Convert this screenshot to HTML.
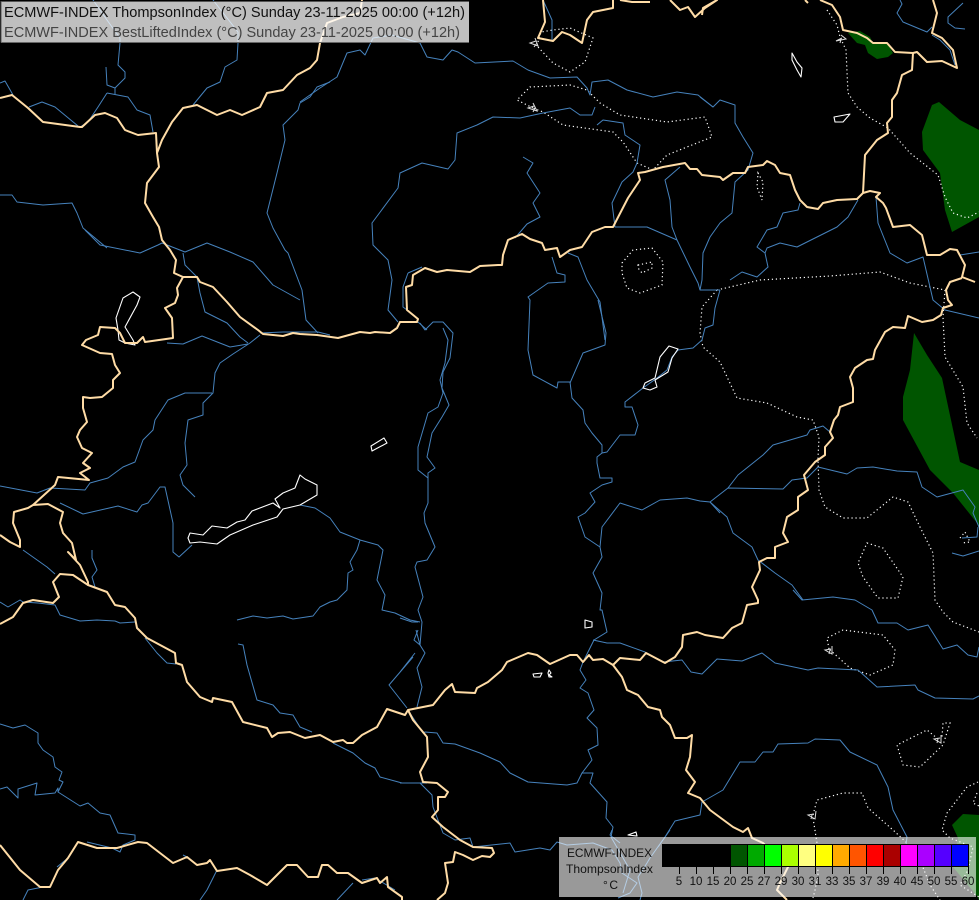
<!DOCTYPE html>
<html>
<head>
<meta charset="utf-8">
<title>ECMWF-INDEX ThompsonIndex</title>
<style>
html,body{margin:0;padding:0;background:#000;width:979px;height:900px;overflow:hidden}
svg{display:block;position:absolute;left:0;top:0}
.g path{fill:#005500;stroke:none}
.r path{fill:none;stroke:#4682bc;stroke-width:1;stroke-linejoin:round}
.d path{fill:none;stroke:#fff;stroke-width:1.2;stroke-dasharray:1.2 2.8}
.l path{fill:none;stroke:#fff;stroke-width:1.1;stroke-linejoin:round}
.b path{fill:none;stroke:#ffdca6;stroke-width:2;stroke-linejoin:round}
.m path{fill:none;stroke:#ddd;stroke-width:1}
text{font-family:"Liberation Sans",sans-serif}
</style>
</head>
<body>
<svg width="979" height="900" viewBox="0 0 979 900" xmlns="http://www.w3.org/2000/svg">
<rect width="979" height="900" fill="#000"/>
<g class="g">
<path d="M848 33L860 31 870 37 873 43 887 43 893 53 888 57 877 59 868 53 865 45 857 43Z"/>
<path d="M939 102L960 120 979 130 979 217 952 232 945 210 940 173 923 150 922 132 932 105Z"/>
<path d="M914 333L927 355 942 378 960 462 979 470 979 527 977 523 953 493 930 470 903 420 903 397 910 370Z"/>
<path d="M952 825L963 814 979 815 979 900 977 896 953 867 958 838Z"/>
</g>
<g class="d">
<path d="M827 10L837 25 840 37 846 50 848 93 857 107 870 118 888 128 910 153 938 175 945 197 953 213 967 218 979 212"/>
<path d="M533 108L517 100 530 87 570 85 587 90 600 103 620 115 667 122 705 117 712 137 667 155 653 170 637 163 623 142 613 132 563 125 543 112Z"/>
<path d="M538 42L541 32 553 30 570 28 593 38 585 62 570 72 553 63 538 47"/>
<path d="M622 263L633 250 652 248 663 262 662 285 640 293 627 288 622 273Z"/>
<path d="M638 265L652 262 652 268 642 273 638 268Z"/>
<path d="M758 173L763 182 762 200 757 187Z"/>
<path d="M717 290L702 307 700 333 703 347 720 362 737 398 767 403 797 417 813 420 819 437 818 458 819 490 825 507 843 518 867 518 893 497 908 502 920 527 933 553 935 600 943 612 953 622 979 632"/>
<path d="M717 290L760 280 830 276 880 272 910 283 945 290 943 317 945 357 963 387 967 423 977 438"/>
<path d="M867 543L883 548 903 577 898 598 878 598 863 577 858 563Z"/>
<path d="M829 649L827 638 843 630 883 635 895 650 893 665 870 675 850 668Z"/>
<path d="M938 739L927 730 897 745 903 765 920 767 943 745 950 723 943 723 942 737"/>
<path d="M813 815L817 800 843 793 862 793 868 808 893 830 907 843 918 855 930 885 940 900"/>
<path d="M813 818L817 843 818 875 815 890 813 898"/>
<path d="M978 782L967 787 947 813 942 830 950 838 973 847 968 870 960 885 979 897"/>
<path d="M977 793L973 803 979 806"/>
<path d="M960 538L965 532 970 542 962 543"/>
</g>
<g class="r">
<path d="M260 335L250 343 233 354 220 363 215 373 213 393 203 403 203 415 188 420 185 443 187 465 180 475 183 485 195 497"/>
<path d="M0 486L37 493 50 488 85 490 90 483 108 478 123 467 135 462 143 440 153 430 155 420 168 400 185 393 212 393"/>
<path d="M60 503L83 514 118 506 137 512 142 505 148 503 160 487 165 487 173 523 173 552 179 557 192 545"/>
<path d="M300 505L315 508 330 518 340 532 360 540 378 545 383 550 377 580 385 595 382 610 395 613 410 620 420 622"/>
<path d="M237 620L253 616 267 618 283 616 293 619 313 616 320 607 330 602 337 600 347 590 348 573 353 570 350 562 357 550 360 540"/>
<path d="M420 323L425 330 433 322 443 322 453 333 450 358 443 372 442 388 449 405 442 417 432 433 427 457 435 468 428 473 428 503 424 513 425 523 435 547 427 560 417 562 415 567 423 597 418 610 422 622 420 645 425 653 417 668 422 687 417 707"/>
<path d="M443 328L448 340 445 363 440 380 443 393 438 407 428 413 418 447 418 470 428 478"/>
<path d="M418 322L427 330M415 653L400 672M413 657L389 685 407 708M416 630L420 645 414 640 418 630M400 618L412 622 418 622"/>
<path d="M408 710L423 733 425 732 437 733 443 743 455 744 480 753 500 762 510 773 528 782 567 785 577 783 582 773 593 773 590 783 607 802 606 818 613 827 611 837 630 870 623 893"/>
<path d="M582 773L592 760 588 750 598 745 597 728 587 718 594 710 588 693 580 688 586 680 580 670 583 662 594 640 607 632 602 610 600 610 602 593 593 573 602 557 600 547 585 537 578 517 585 513 595 502 590 493 602 485 612 482 612 478 600 478 597 463 597 457 602 453 602 445 592 433 585 423 583 410 572 398 570 382 558 382 557 388 533 375 528 350 530 300 528 297 548 283 565 282 565 275 557 273 552 257"/>
<path d="M598 300L606 333 605 345 583 353 570 383"/>
<path d="M602 453L607 452 620 435 635 435 638 425 632 407 625 407 625 402 643 388 657 378 667 370 672 357 678 350 693 348 702 340 705 328 713 325 715 308 720 290"/>
<path d="M700 97L713 107 720 100 735 105 735 123 743 137 753 153 748 170 735 182 732 213 720 223 710 237 703 253 702 280 700 290"/>
<path d="M300 102L320 88 337 77 347 53 360 50 365 55 373 38 392 35 420 43 427 57 443 60 452 50 458 52 475 63 513 61 528 70 550 78 577 77 587 88 590 95 592 82 608 80 627 90 653 97 677 92 698 95 713 107"/>
<path d="M595 107L592 115 580 115 570 108 543 113 520 118 493 117 477 125 457 133 455 160 448 169 422 163 400 173 398 188 372 223 373 245 388 260 392 280 388 310 398 322"/>
<path d="M408 273L422 267M408 273L403 287 403 307 407 310"/>
<path d="M523 157L533 163 527 173 540 193 533 203 540 217 527 224 515 238"/>
<path d="M597 125L603 120 623 123 625 135 640 145 637 163 633 172 622 182 612 203 615 227 647 227 677 240 690 267 698 283 700 290 720 290"/>
<path d="M680 167L665 180 670 200 672 227 677 240"/>
<path d="M568 253L578 257 587 280 600 302 605 340"/>
<path d="M800 203L798 210 783 213 777 227 767 230 757 247 765 253 768 267 757 277 742 272 730 280"/>
<path d="M858 200L848 217 837 227 817 237 797 247 780 243 767 248 765 253"/>
<path d="M876 197L878 223 890 253 907 263 923 257 933 300 945 310 979 318M960 255L979 252"/>
<path d="M963 3L948 17 948 23 955 28 965 29"/>
<path d="M900 0L902 4 897 13 903 22 927 32 932 27M932 35L940 40 950 50 955 65"/>
<path d="M818 467L847 474 857 468 873 467 897 471 917 472 922 487 937 497 963 490 975 507 973 513 979 527"/>
<path d="M818 467L807 478 792 480 783 489 728 488 710 502 700 501 687 498 660 500 642 510 620 503 602 527 600 547"/>
<path d="M728 488L738 475 763 455 773 445 807 435 810 430 823 426 830 432"/>
<path d="M710 502L727 517 733 533 752 547 758 560 775 573 792 585 803 600"/>
<path d="M710 502L720 513"/>
<path d="M962 538L977 537 978 527M952 553L963 556 979 551"/>
<path d="M793 590L802 600 833 597 855 600 872 610 878 623 897 623 908 630 928 625 943 649 957 645 968 655 977 657 979 647"/>
<path d="M593 640L607 643 620 643 645 652 663 662 682 660 691 672 702 674 717 659 742 661 762 653 775 663 808 670 818 668 858 670 877 687 915 685 918 690 935 698 973 699 979 696"/>
<path d="M665 837L675 821 700 815 702 802 723 790 740 762 755 762 763 752 773 752 778 744 808 743 815 739 840 740 850 752 877 765 888 787 893 810 907 837 906 845"/>
<path d="M665 837L650 858 647 863 638 877 642 893 640 900"/>
<path d="M400 783L420 783 432 795 433 807 443 833 455 840 470 838 473 847 510 843 515 852 540 848 550 850 557 842 567 845 593 843 612 850 620 863 622 873 637 883 630 893 618 898"/>
<path d="M612 830L610 835 620 843M670 830L658 847"/>
<path d="M0 602L8 607 20 600 23 602 38 603 55 605 60 615 80 621 97 620 115 621 120 623 135 622"/>
<path d="M23 550L47 567 55 574"/>
<path d="M92 550L92 558 97 570 92 577 95 587"/>
<path d="M145 638L157 653 167 663 176 664"/>
<path d="M238 644L243 645 247 665 257 700 273 705 280 713 293 715 300 727 312 732"/>
<path d="M333 743L353 753 365 763 375 768 380 777 402 783 427 783"/>
<path d="M0 724L13 728 25 725 38 733 38 743 43 750 53 757 55 767 62 772 59 780 63 782 58 792 80 806 88 803 100 813 110 815 118 833 135 835 135 840 123 845 120 852 112 848 87 842"/>
<path d="M0 789L7 787 18 798 18 789 37 783 35 795 55 793 58 788 58 792"/>
<path d="M57 867L68 858M43 887L28 890 23 900M217 870L207 890 200 900M183 855L187 857M353 883L337 900M362 880L375 878 395 890"/>
<path d="M120 43L118 65 125 72 125 78 115 88 115 95M106 67L107 85 115 88"/>
<path d="M93 0L107 20 120 38 120 43"/>
<path d="M213 0L238 32 238 43 237 60 225 67 220 82 207 88 193 105"/>
<path d="M107 93L128 97 137 110 150 115 153 132M107 93L98 107 88 122 80 127"/>
<path d="M0 83L5 81 13 95M29 107L42 102 55 107 78 126"/>
<path d="M330 82L317 87 310 97 300 103 298 110 283 125 285 140 277 173 267 213 273 228 285 250 288 253 302 290 306 320 318 333"/>
<path d="M0 195L12 195 17 202 43 205 72 203 77 213 83 228 107 248"/>
<path d="M85 230L100 245 140 253 158 245 162 243"/>
<path d="M162 243L185 252 207 243 230 252 253 262 273 285 300 300"/>
<path d="M183 253L185 265 197 277 200 293 205 312 227 323 240 337 248 343"/>
<path d="M167 343L183 344 202 336 230 347 248 344"/>
<path d="M260 333L283 332 318 332 330 335"/>
<path d="M543 0L552 20 552 40"/>
</g>
<g class="l">
<path d="M190 533L203 535 212 526 227 528 237 522 245 520 252 511 273 503 280 508 275 499 283 493 295 488 300 475 305 479 317 485 317 495 300 505 283 509 277 517 253 525 230 535 217 544 200 542 190 543 188 538Z"/>
<path d="M133 292L140 297 137 305 125 327 133 340 135 345 125 343 119 340 118 330 116 318 123 298Z"/>
<path d="M371 446L384 438 387 443 372 451Z"/>
<path d="M669 346L678 349 672 358 668 372 655 380 657 387 650 390 643 388 645 383 655 378 660 357Z"/>
<path d="M585 620L592 622 592 627 585 628Z"/>
<path d="M792 53L797 62 802 68 801 77 797 70 792 60Z"/>
<path d="M834 117L850 114 843 122 835 122Z"/>
<path d="M533 674L542 673 540 677 534 677Z"/>
<path d="M549 670L551 673 549 675 552 677 549 677 548 673Z"/>
<path d="M628 835L636 832 637 836Z"/>
</g>
<g class="b">
<path d="M0 98L12 95 28 108 43 122 80 127 82 127 95 115 105 113 117 118 125 130 138 135 156 133 157 153 159 167 147 183 145 203 153 217 159 227 162 240 170 250 176 260 174 273 183 277 197 277 200 282 213 287 227 302 240 317 258 330 263 334 283 336 293 333 300 334 317 335 338 338 360 332 370 333 375 332 390 333 397 328 400 322 417 322 418 319 407 310 406 287 412 285 413 275 425 268 437 272 447 270 470 272 480 266 498 265 502 265 503 255 508 240 522 234 530 239 542 243 545 250 557 248 560 257 570 250 582 247 592 232 605 227 613 227 628 198 640 180 638 173 645 172 663 167 685 163 690 169 697 169 702 175 720 177 723 180 733 173 745 173 748 167 763 165 767 161 775 165 780 173 790 175 795 190 800 200 807 207 818 209 823 203 837 200 857 199 863 193 870 191 880 193 876 197 883 203 886 208 893 227 910 225 922 235 927 255 940 255 950 249 957 250 965 265 962 277 975 282"/>
<path d="M962 278L950 282 946 290 948 300 952 305 943 308 941 315 933 320 922 322 908 316 905 328 893 327 885 332 875 350 873 359 867 360 855 368 850 377 853 388 853 402 840 407 838 415 834 420 830 432 833 438 825 447 825 455 815 462 804 475 808 490 798 497 798 510 787 517 783 533 788 542 775 547 775 558 767 558 759 562 760 570 752 587 758 600 758 603 747 605 742 623 732 628 723 638 705 635 697 632 683 635 682 647 675 657 665 663 646 653 640 660 620 658 613 665 603 659 593 660 589 655 583 662 577 655 570 655 550 664 537 655 528 653 507 662 502 670 488 682 477 688 475 693 455 692 452 684 445 690 433 705 408 710 405 715 387 709 377 727 362 735 353 743 347 743 343 740 333 742 320 735 305 738 290 732 278 733 272 737 267 728 243 722 232 702 213 698 212 702 200 697 187 682 182 665 176 663 175 653 147 638 137 628 135 618 125 607 115 605 107 592 88 585 88 582 80 565 68 552 76 560 72 543 63 533 60 523 63 512 48 504 33 505 28 508 14 512 13 523 20 540 20 547 10 542 0 535"/>
<path d="M33 505L55 485 58 477 89 480 80 473 90 468 83 463 92 453 82 448 77 437 80 430 87 422 83 408 83 397 90 398 102 397 113 388 113 380 120 373 115 365 112 354 100 353 82 345 86 340 98 335 100 327 115 328 120 333 125 343 137 343 143 337 145 342 173 338 172 318 165 308 175 303 178 295 177 288 183 277"/>
<path d="M88 585L73 575 60 574 53 582 59 597 53 603 33 600 23 603 13 617 0 624"/>
<path d="M0 845L20 870 40 887 50 887 58 870 68 858 78 842 97 848 117 848 138 842 147 843 173 863 187 857 197 865 207 863 210 860 217 871 237 868 250 875 267 885 287 865 297 865 308 877 318 877 322 865 328 865 337 873 348 873 362 883 377 878 380 883 387 877 388 887 402 897 402 900"/>
<path d="M408 710L413 720 427 737 428 757 420 772 423 782 437 783 448 792 445 797 438 797 438 810 432 817 443 827 460 840 473 847 492 848 494 853 490 857 482 856 473 860 463 855 455 852 453 862 445 863 448 883 445 893 437 900"/>
<path d="M613 665L622 677 627 690 638 695 648 707 660 710 662 717 670 725 675 738 687 738 692 735 690 757 686 770 695 782 688 793 700 798 710 810 733 827 743 832 748 828 752 838 763 843 775 855 788 867 780 883 777 890 787 900"/>
<path d="M913 53L912 70 902 75 897 93 892 100 892 117 887 123 888 133 877 140 865 155 863 193"/>
<path d="M820 0L832 5 840 17 843 30 857 33 867 38 873 43 887 43 895 52 913 53 917 52 927 62 942 61 957 68 953 50 942 38 932 33 937 13 933 0"/>
<path d="M543 0L545 22 538 38 553 41 562 32 570 35 582 43 587 20 593 12 613 8 613 0"/>
<path d="M362 0L360 13 343 17 327 23 320 43 317 60 310 68 297 75 283 90 267 93 260 107 242 115 230 110 217 115 197 105 183 108 172 122 162 140 157 153"/>
<path d="M670 0L680 10 688 7 695 17 705 8 717 0 703 8 702 15"/>
<path d="M620 0L632 2 650 2M805 0L808 3"/>
</g>
<g class="m">
<path d="M533 103L537 111 528 108 534 106M535 108L533 112"/>
<path d="M535 38L538 46 530 43 536 41M537 43L534 47"/>
<path d="M841 35L846 39 836 41 842 38M841 39L840 43"/>
<path d="M832 646L832 654 825 650 831 649M830 650L829 654"/>
<path d="M941 735L941 743 934 739 940 738M938 739L937 743"/>
<path d="M816 811L815 819 808 815 814 814M812 815L811 819"/>
</g>
<rect x="1" y="1" width="468" height="42" fill="#fff" fill-opacity=".75"/>
<path d="M1 42.5V1.5H469" fill="none" stroke="#555" stroke-width="1"/>
<path d="M1 42.5H469" fill="none" stroke="#666" stroke-width="1"/>
<text x="4" y="17" font-size="14.4" textLength="461" lengthAdjust="spacingAndGlyphs" fill="#111">ECMWF-INDEX ThompsonIndex (°C) Sunday 23-11-2025 00:00 (+12h)</text>
<text x="4" y="37" font-size="14.4" textLength="456" lengthAdjust="spacingAndGlyphs" fill="#444">ECMWF-INDEX BestLiftedIndex (°C) Sunday 23-11-2025 00:00 (+12h)</text>
<rect x="559" y="837" width="417" height="60" fill="#fff" fill-opacity=".6"/>
<g shape-rendering="crispEdges">
<rect x="662" y="844" width="307" height="23" fill="#000"/>
<rect x="730" y="844" width="17" height="23" fill="#005500"/>
<rect x="747" y="844" width="17" height="23" fill="#00aa00"/>
<rect x="764" y="844" width="17" height="23" fill="#00ff00"/>
<rect x="781" y="844" width="17" height="23" fill="#aaff00"/>
<rect x="798" y="844" width="17" height="23" fill="#ffff80"/>
<rect x="815" y="844" width="17" height="23" fill="#ffff00"/>
<rect x="832" y="844" width="17" height="23" fill="#ffaa00"/>
<rect x="849" y="844" width="17" height="23" fill="#ff5500"/>
<rect x="866" y="844" width="17" height="23" fill="#ff0000"/>
<rect x="883" y="844" width="17" height="23" fill="#aa0000"/>
<rect x="900" y="844" width="17" height="23" fill="#ff00ff"/>
<rect x="917" y="844" width="17" height="23" fill="#aa00ff"/>
<rect x="934" y="844" width="17" height="23" fill="#5500ff"/>
<rect x="951" y="844" width="18" height="23" fill="#0000ff"/>
<path fill="none" stroke="#000" stroke-width="1" d="M679.5 844V874M696.5 844V874M713.5 844V874M730.5 844V874M747.5 844V874M764.5 844V874M781.5 844V874M798.5 844V874M815.5 844V874M832.5 844V874M849.5 844V874M866.5 844V874M883.5 844V874M900.5 844V874M917.5 844V874M934.5 844V874M951.5 844V874M968.5 844V874M662.5 844.5H968.5M662.5 866.5H968.5"/>
</g>
<g font-size="11.5" fill="#111" text-anchor="middle">
<text x="679" y="885">5</text><text x="696" y="885">10</text><text x="713" y="885">15</text><text x="730" y="885">20</text><text x="747" y="885">25</text><text x="764" y="885">27</text><text x="781" y="885">29</text><text x="798" y="885">30</text><text x="815" y="885">31</text><text x="832" y="885">33</text><text x="849" y="885">35</text><text x="866" y="885">37</text><text x="883" y="885">39</text><text x="900" y="885">40</text><text x="917" y="885">45</text><text x="934" y="885">50</text><text x="951" y="885">55</text><text x="968" y="885">60</text>
</g>
<g font-size="12" fill="#111">
<text x="567" y="857" textLength="85" lengthAdjust="spacingAndGlyphs">ECMWF-INDEX</text>
<text x="566" y="873" textLength="87" lengthAdjust="spacingAndGlyphs">ThompsonIndex</text>
<text x="603" y="889" textLength="15">°C</text>
</g>
</svg>
</body>
</html>
